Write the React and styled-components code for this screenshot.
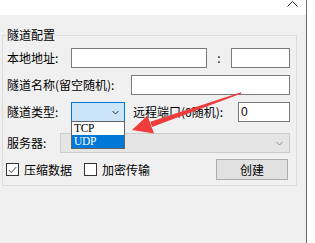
import React from "react";
import styled, { createGlobalStyle } from "styled-components";

const Global = createGlobalStyle`
  html, body { margin: 0; padding: 0; background: #fff; }
  body { font-family: "Noto Sans CJK SC", "Liberation Sans", sans-serif; font-size: 12px; color: #000; }
`;

const Stage = styled.div`
  position: relative;
  width: 315px;
  height: 243px;
  background: #fff;
  overflow: hidden;
`;

const Window = styled.div`
  width: 307px;
  height: 243px;
  box-sizing: border-box;
  border-right: 1px solid #6e6e6e;
  display: flex;
  flex-direction: column;
`;

const TitleStrip = styled.div`
  height: 15px;
  flex: none;
  background: #fff;
  display: flex;
  justify-content: flex-end;
  align-items: flex-start;
  padding-right: 8px;
`;

const Body = styled.div`
  flex: 1;
  background: #f0f0f0;
  padding: 12px 9px 0 2px;
`;

const Group = styled.fieldset`
  margin: 0;
  border: 1px solid #dcdcdc;
  padding: 5px 6px 5px 4px;
  min-width: 0;
`;

const Legend = styled.legend`
  padding: 0;
  margin-left: 0;
  line-height: 16px;
  font-size: 12px;
`;

const Rows = styled.div`
  display: flex;
  flex-direction: column;
`;

const Row = styled.div`
  position: relative;
  display: flex;
  align-items: center;
  height: ${(p) => p.$h || 20}px;
  margin-top: ${(p) => p.$gap || 0}px;
  z-index: ${(p) => (p.$front ? 2 : "auto")};
`;

const Label = styled.span`
  flex: none;
  width: ${(p) => (p.$w ? `${p.$w}px` : "auto")};
  margin-left: ${(p) => p.$ml || 0}px;
  white-space: nowrap;
  line-height: 16px;
`;

const Field = styled.div`
  box-sizing: border-box;
  height: 20px;
  border: 1px solid #7a7a7a;
  background: #fff;
  flex: ${(p) => (p.$w ? "none" : "1")};
  width: ${(p) => (p.$w ? `${p.$w}px` : "auto")};
  font-family: "Liberation Sans", sans-serif;
  font-size: 12px;
  line-height: 18px;
  padding-left: 2px;
`;

const Colon = styled.span`
  flex: none;
  width: 24px;
  text-align: center;
  line-height: 16px;
`;

const SelectWrap = styled.div`
  position: relative;
  flex: none;
  width: 54px;
  height: 20px;
`;

const SelectBox = styled.div`
  box-sizing: border-box;
  height: 20px;
  border: 1px solid #0078d7;
  background: #cce4f7;
  display: flex;
  align-items: center;
  justify-content: flex-end;
  padding-right: 5px;
`;

const DropList = styled.div`
  position: absolute;
  left: 0;
  top: 19px;
  width: 54px;
  box-sizing: border-box;
  border: 1px solid #646464;
  background: #fff;
  z-index: 2;
`;

const DropItem = styled.div`
  height: 13px;
  line-height: 13px;
  padding-left: 2px;
  font-family: "Liberation Serif", serif;
  font-size: 11.5px;
  letter-spacing: -0.3px;
  background: ${(p) => (p.$active ? "#0078d7" : "#fff")};
  color: ${(p) => (p.$active ? "#fff" : "#000")};
`;

const Combo = styled.div`
  flex: 1;
  box-sizing: border-box;
  height: 20px;
  border: 1px solid #cccccc;
  background: #e5e5e5;
  display: flex;
  align-items: center;
  justify-content: flex-end;
  padding-right: 6px;
`;

const CheckGroup = styled.label`
  display: flex;
  align-items: center;
  gap: 5px;
  margin-left: ${(p) => p.$ml || 0}px;
`;

const CheckBox = styled.span`
  box-sizing: border-box;
  width: 13px;
  height: 13px;
  border: 1px solid #333;
  background: #fff;
  display: flex;
  align-items: center;
  justify-content: center;
`;

const Button = styled.div`
  margin-left: auto;
  margin-right: 2px;
  box-sizing: border-box;
  width: 72px;
  height: 21px;
  border: 1px solid #adadad;
  background: #e1e1e1;
  text-align: center;
  line-height: 19px;
`;

const Overlay = styled.svg`
  position: absolute;
  left: 0;
  top: 0;
  pointer-events: none;
  z-index: 5;
`;

const Chevron = ({ color = "#333" }) => (
  <svg width="7" height="5" viewBox="0 0 7 5">
    <polyline points="0.5,1 3.5,4 6.5,1" fill="none" stroke={color} strokeWidth="1" />
  </svg>
);

export default function App() {
  return (
    <Stage>
      <Global />
      <Window>
        <TitleStrip>
          <svg width="11" height="7" viewBox="0 0 11 7">
            <polyline points="0.5,6.5 5.5,1.5 10.5,6.5" fill="none" stroke="#222" strokeWidth="1" />
          </svg>
        </TitleStrip>
        <Body>
          <Group>
            <Legend>隧道配置</Legend>
            <Rows>
              <Row>
                <Label $w={64}>本地地址:</Label>
                <Field $w={136} />
                <Colon>:</Colon>
                <Field />
              </Row>
              <Row $gap={7}>
                <Label $w={124}>隧道名称(留空随机):</Label>
                <Field />
              </Row>
              <Row $gap={7} $front>
                <Label $w={64}>隧道类型:</Label>
                <SelectWrap>
                  <SelectBox>
                    <Chevron />
                  </SelectBox>
                  <DropList>
                    <DropItem>TCP</DropItem>
                    <DropItem $active>UDP</DropItem>
                  </DropList>
                </SelectWrap>
                <Label $w={105} $ml={8}>远程端口(0随机):</Label>
                <Field>0</Field>
              </Row>
              <Row $gap={11}>
                <Label $w={53}>服务器:</Label>
                <Combo>
                  <Chevron color="#888" />
                </Combo>
              </Row>
              <Row $gap={6} $h={21}>
                <CheckGroup $ml={-1}>
                  <CheckBox>
                    <svg width="9" height="8" viewBox="0 0 9 8">
                      <polyline points="0.8,4 3.3,6.5 8.3,1" fill="none" stroke="#444" strokeWidth="1" />
                    </svg>
                  </CheckBox>
                  <span>压缩数据</span>
                </CheckGroup>
                <CheckGroup $ml={12}>
                  <CheckBox />
                  <span>加密传输</span>
                </CheckGroup>
                <Button>创建</Button>
              </Row>
            </Rows>
          </Group>
        </Body>
      </Window>
      <Overlay width="315" height="243" viewBox="0 0 315 243">
        <polygon points="241,92.2 241.4,93.6 152,127 150.4,121.8" fill="#ee3b3b" />
        <polygon points="132,130 147.5,115.5 154,133.5" fill="#ee3b3b" />
      </Overlay>
    </Stage>
  );
}
